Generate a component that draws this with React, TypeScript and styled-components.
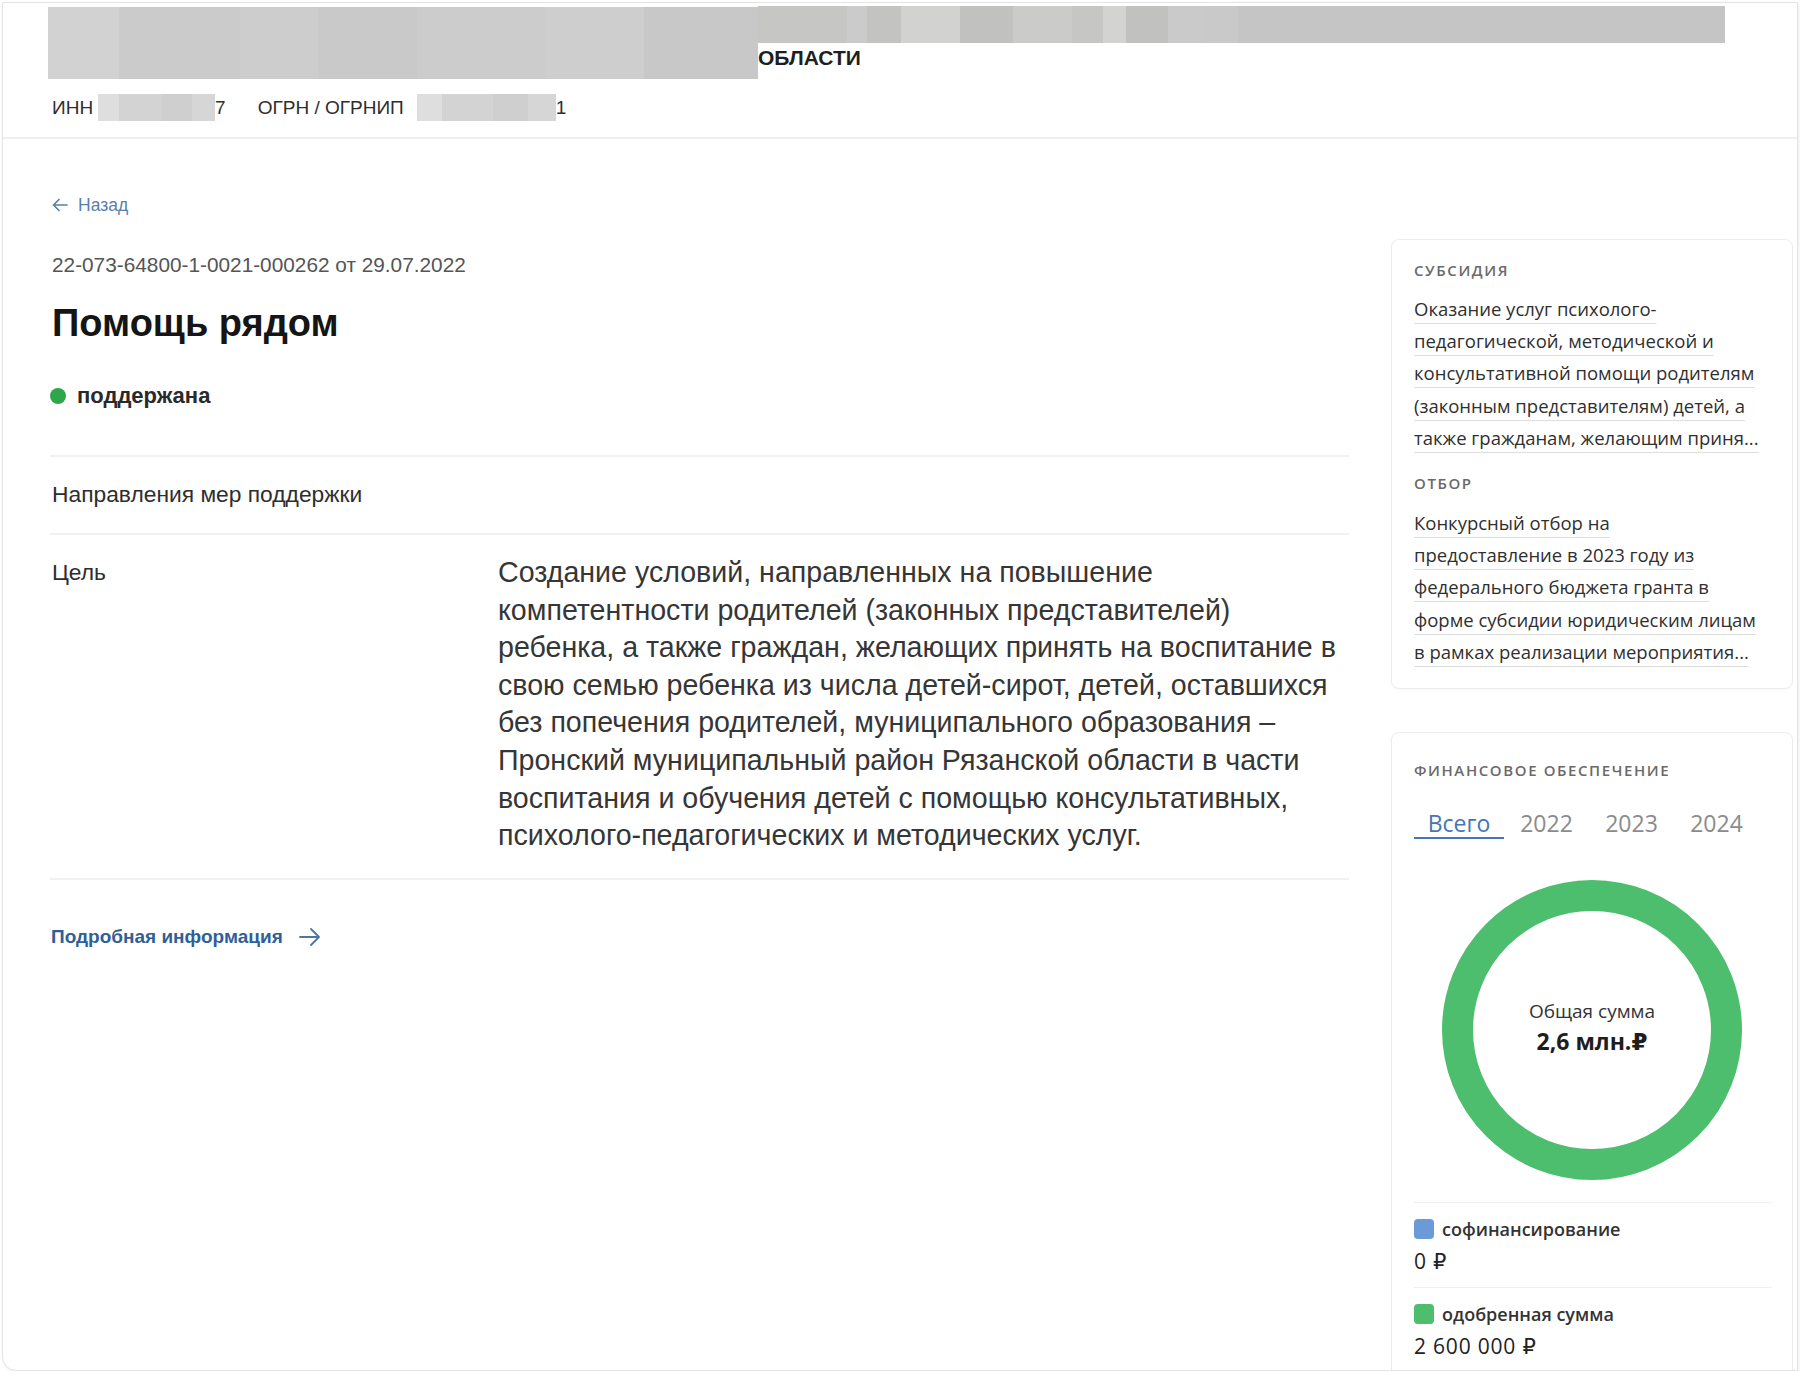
import React from "react";
import styled, { createGlobalStyle } from "styled-components";

const Global = createGlobalStyle`
  html, body { margin: 0; padding: 0; background: #ffffff; }
  body { font-family: "Liberation Sans", Arial, sans-serif; color: #2b2b2b; }
  * { box-sizing: border-box; }
`;

const Window = styled.div`
  margin: 2px 2px 0 2px;
  height: 1369px;
  border: 1px solid #e4e4e4;
  border-bottom-left-radius: 14px;
  background: #fff;
  overflow: hidden;
  box-shadow: 1px 1px 3px rgba(0, 0, 0, 0.08);
`;

const Header = styled.header`
  height: 136px;
  padding: 2px 0 0 45px;
  border-bottom: 2px solid #efefef;
`;

const NameRow = styled.div`
  display: flex;
  align-items: flex-start;
`;

const Redacted = styled.div<{ $w: number; $h: number; $tone?: "dark" | "light" }>`
  width: ${(p) => p.$w}px;
  height: ${(p) => p.$h}px;
  flex: none;
  background: ${(p) =>
    p.$tone === "light"
      ? "linear-gradient(90deg, #dedede 0 18%, #d3d3d3 18% 55%, #cfcfcf 55% 80%, #d6d6d6 80% 100%)"
      : "linear-gradient(90deg, #d2d2d2 0 10%, #cbcbcb 10% 27%, #cdcdcd 27% 38%, #c9c9c9 38% 52%, #cccccc 52% 70%, #cecece 70% 84%, #c8c8c8 84% 100%)"};
`;

const RedactedStrip = styled.div`
  width: 967px;
  height: 37px;
  margin-top: 1px;
  background: linear-gradient(
    90deg,
    #c6c6c5 0 9.2%,
    #cbcbcb 9.2% 11.3%,
    #c3c3c2 11.3% 14.8%,
    #d2d2d1 14.8% 20.9%,
    #c1c1c0 20.9% 26.4%,
    #cbcbca 26.4% 32.5%,
    #c6c6c5 32.5% 35.7%,
    #d3d3d2 35.7% 38.1%,
    #c1c1c0 38.1% 42.4%,
    #cacaca 42.4% 46%,
    #c9c9c9 46% 49.6%,
    #c5c5c5 49.6% 100%
  );
`;

const NameTail = styled.div`
  display: flex;
  flex-direction: column;
`;

const NameText = styled.div`
  margin-top: 3px;
  font-size: 21px;
  line-height: 24px;
  font-weight: 700;
  color: #1f1f1f;
`;

const IdsRow = styled.div`
  display: flex;
  align-items: center;
  gap: 32px;
  margin-top: 15px;
  padding-left: 4px;
`;

const IdItem = styled.div`
  display: flex;
  align-items: center;
  font-size: 19px;
  line-height: 24px;
  color: #2e2e2e;
`;

const IdLabel = styled.span`
  margin-right: 5px;
`;

const Main = styled.main`
  display: grid;
  grid-template-columns: 1299px 402px;
  column-gap: 42px;
  padding-left: 47px;
`;

const LeftCol = styled.section`
  display: flex;
  flex-direction: column;
  padding-top: 55px;
`;

const BackLink = styled.a`
  display: flex;
  align-items: center;
  gap: 10px;
  padding-left: 2px;
  font-size: 17.5px;
  line-height: 22px;
  color: #5a7fa8;
  text-decoration: none;
`;

const DocNumber = styled.div`
  margin-top: 36px;
  padding-left: 2px;
  font-size: 20.8px;
  line-height: 26px;
  color: #555;
`;

const Title = styled.h1`
  margin: 22px 0 0;
  padding-left: 2px;
  font-size: 38px;
  line-height: 46px;
  font-weight: 700;
  color: #151515;
`;

const Status = styled.div`
  display: flex;
  align-items: center;
  gap: 11px;
  margin-top: 36px;
  font-size: 22px;
  line-height: 28px;
  font-weight: 700;
  color: #2a2a2a;
`;

const Dot = styled.span`
  width: 16px;
  height: 16px;
  border-radius: 50%;
  background: #2ea64a;
`;

const InfoRow = styled.div<{ $pt: number; $pb: number }>`
  display: grid;
  grid-template-columns: 448px 1fr;
  border-top: 2px solid #f1f1f1;
  padding: ${(p) => p.$pt}px 0 ${(p) => p.$pb}px;
`;

const RowLabel = styled.div<{ $lh: number }>`
  padding-left: 2px;
  font-size: 22.8px;
  line-height: ${(p) => p.$lh}px;
  color: #2e2e2e;
`;

const GoalText = styled.p`
  margin: 0;
  font-size: 28.6px;
  line-height: 37.6px;
  color: #363636;
  white-space: nowrap;
`;

const Rows = styled.div`
  display: flex;
  flex-direction: column;
  margin-top: 45px;
  border-bottom: 2px solid #f1f1f1;
`;

const MoreLink = styled.a`
  display: flex;
  align-items: center;
  gap: 16px;
  margin-top: 45px;
  padding-left: 1px;
  font-size: 19px;
  line-height: 24px;
  font-weight: 700;
  color: #2f5f97;
  text-decoration: none;
`;

const RightCol = styled.aside`
  display: flex;
  flex-direction: column;
  gap: 43px;
  padding-top: 100px;
  font-family: "Open Sans", "DejaVu Sans", sans-serif;
`;

const Card = styled.div<{ $pt: number }>`
  border: 1px solid #ececec;
  border-radius: 8px;
  padding: ${(p) => p.$pt}px 22px 20px 22px;
  box-shadow: 0 1px 3px rgba(0, 0, 0, 0.03);
`;

const CardLabel = styled.div<{ $mt?: number }>`
  margin-top: ${(p) => p.$mt ?? 0}px;
  font-size: 15px;
  line-height: 18px;
  font-weight: 600;
  letter-spacing: 1.6px;
  text-transform: uppercase;
  color: #6a6a6a;
`;

const CardLink = styled.a<{ $mt: number }>`
  display: block;
  margin-top: ${(p) => p.$mt}px;
  font-size: 18.5px;
  line-height: 32.2px;
  color: #2f2f2f;
  white-space: nowrap;
  text-decoration: underline;
  text-decoration-color: #dedede;
  text-decoration-thickness: 1px;
  text-underline-offset: 7px;
`;

const Tabs = styled.div`
  display: flex;
  margin-top: 30px;
`;

const Tab = styled.div<{ $active?: boolean; $w: number }>`
  width: ${(p) => p.$w}px;
  text-align: center;
  font-size: 23px;
  line-height: 28px;
  color: ${(p) => (p.$active ? "#4476b6" : "#8b8b8b")};
  border-bottom: 2px solid ${(p) => (p.$active ? "#4476b6" : "transparent")};
`;

const DonutWrap = styled.div`
  position: relative;
  width: 300px;
  height: 300px;
  margin: 41px auto 0;
`;

const DonutCenter = styled.div`
  position: absolute;
  inset: 0;
  display: flex;
  flex-direction: column;
  align-items: center;
  justify-content: center;
  padding-bottom: 6px;
`;

const DonutCaption = styled.div`
  font-size: 19px;
  line-height: 28px;
  color: #333;
`;

const DonutSum = styled.div`
  font-size: 23px;
  line-height: 32px;
  font-weight: 700;
  color: #1e1e1e;
`;

const Legend = styled.div`
  margin-top: 22px;
  margin-right: -2px;
`;

const LegendItem = styled.div`
  border-top: 1px solid #efefef;
  padding: 14px 0 14px;
`;

const LegendName = styled.div`
  display: flex;
  align-items: center;
  gap: 8px;
  font-size: 18px;
  line-height: 24px;
  font-weight: 600;
  color: #333;
`;

const Swatch = styled.span<{ $c: string }>`
  width: 20px;
  height: 20px;
  border-radius: 4px;
  background: ${(p) => p.$c};
`;

const LegendValue = styled.div`
  margin-top: 8px;
  font-size: 21px;
  line-height: 24px;
  letter-spacing: 0.8px;
  color: #222;
`;

const ArrowLeft = () => (
  <svg width="16" height="14" viewBox="0 0 16 14" fill="none" stroke="#5a7fa8" strokeWidth="1.7" strokeLinecap="round" strokeLinejoin="round">
    <path d="M15 7H1.5M7 1.5L1.5 7 7 12.5" />
  </svg>
);

const ArrowRight = () => (
  <svg width="22" height="20" viewBox="0 0 22 20" fill="none" stroke="#4c74a4" strokeWidth="1.8" strokeLinecap="round" strokeLinejoin="round">
    <path d="M1 10h19M12 2l8 8-8 8" />
  </svg>
);

const goalLines = [
  "Создание условий, направленных на повышение",
  "компетентности родителей (законных представителей)",
  "ребенка, а также граждан, желающих принять на воспитание в",
  "свою семью ребенка из числа детей-сирот, детей, оставшихся",
  "без попечения родителей, муниципального образования –",
  "Пронский муниципальный район Рязанской области в части",
  "воспитания и обучения детей с помощью консультативных,",
  "психолого-педагогических и методических услуг.",
];

const subsidyLines = [
  "Оказание услуг психолого-",
  "педагогической, методической и",
  "консультативной помощи родителям",
  "(законным представителям) детей, а",
  "также гражданам, желающим приня...",
];

const selectionLines = [
  "Конкурсный отбор на",
  "предоставление в 2023 году из",
  "федерального бюджета гранта в",
  "форме субсидии юридическим лицам",
  "в рамках реализации мероприятия...",
];

const renderLines = (lines: string[]) =>
  lines.map((l, i) => (
    <React.Fragment key={i}>
      {l}
      {i < lines.length - 1 && <br />}
    </React.Fragment>
  ));

export default function App() {
  return (
    <>
      <Global />
      <Window>
        <Header>
          <NameRow>
            <Redacted $w={710} $h={72} style={{ marginTop: 2 }} />
            <NameTail>
              <RedactedStrip />
              <NameText>ОБЛАСТИ</NameText>
            </NameTail>
          </NameRow>
          <IdsRow>
            <IdItem>
              <IdLabel>ИНН</IdLabel>
              <Redacted $w={117} $h={27} $tone="light" />
              <span>7</span>
            </IdItem>
            <IdItem>
              <IdLabel>ОГРН / ОГРНИП</IdLabel>
              <Redacted $w={139} $h={27} $tone="light" style={{ marginLeft: 8 }} />
              <span>1</span>
            </IdItem>
          </IdsRow>
        </Header>
        <Main>
          <LeftCol>
            <BackLink href="#">
              <ArrowLeft />
              Назад
            </BackLink>
            <DocNumber>22-073-64800-1-0021-000262 от 29.07.2022</DocNumber>
            <Title>Помощь рядом</Title>
            <Status>
              <Dot />
              поддержана
            </Status>
            <Rows>
              <InfoRow $pt={22} $pb={24}>
                <RowLabel $lh={30}>Направления мер поддержки</RowLabel>
                <div />
              </InfoRow>
              <InfoRow $pt={19} $pb={23}>
                <RowLabel $lh={37.6}>Цель</RowLabel>
                <GoalText>{renderLines(goalLines)}</GoalText>
              </InfoRow>
            </Rows>
            <MoreLink href="#">
              Подробная информация
              <ArrowRight />
            </MoreLink>
          </LeftCol>
          <RightCol>
            <Card $pt={21}>
              <CardLabel>Субсидия</CardLabel>
              <CardLink href="#" $mt={14}>{renderLines(subsidyLines)}</CardLink>
              <CardLabel $mt={20}>Отбор</CardLabel>
              <CardLink href="#" $mt={15}>{renderLines(selectionLines)}</CardLink>
            </Card>
            <Card $pt={28}>
              <CardLabel>Финансовое обеспечение</CardLabel>
              <Tabs>
                <Tab $active $w={90}>Всего</Tab>
                <Tab $w={85}>2022</Tab>
                <Tab $w={85}>2023</Tab>
                <Tab $w={85}>2024</Tab>
              </Tabs>
              <DonutWrap>
                <svg width="300" height="300" viewBox="0 0 300 300">
                  <circle cx="150" cy="150" r="134.5" fill="none" stroke="#4dbd6e" strokeWidth="31" />
                </svg>
                <DonutCenter>
                  <DonutCaption>Общая сумма</DonutCaption>
                  <DonutSum>2,6 млн.₽</DonutSum>
                </DonutCenter>
              </DonutWrap>
              <Legend>
                <LegendItem>
                  <LegendName>
                    <Swatch $c="#6b9ad8" />
                    софинансирование
                  </LegendName>
                  <LegendValue>0 ₽</LegendValue>
                </LegendItem>
                <LegendItem>
                  <LegendName>
                    <Swatch $c="#4dbd6e" />
                    одобренная сумма
                  </LegendName>
                  <LegendValue>2 600 000 ₽</LegendValue>
                </LegendItem>
              </Legend>
            </Card>
          </RightCol>
        </Main>
      </Window>
    </>
  );
}
